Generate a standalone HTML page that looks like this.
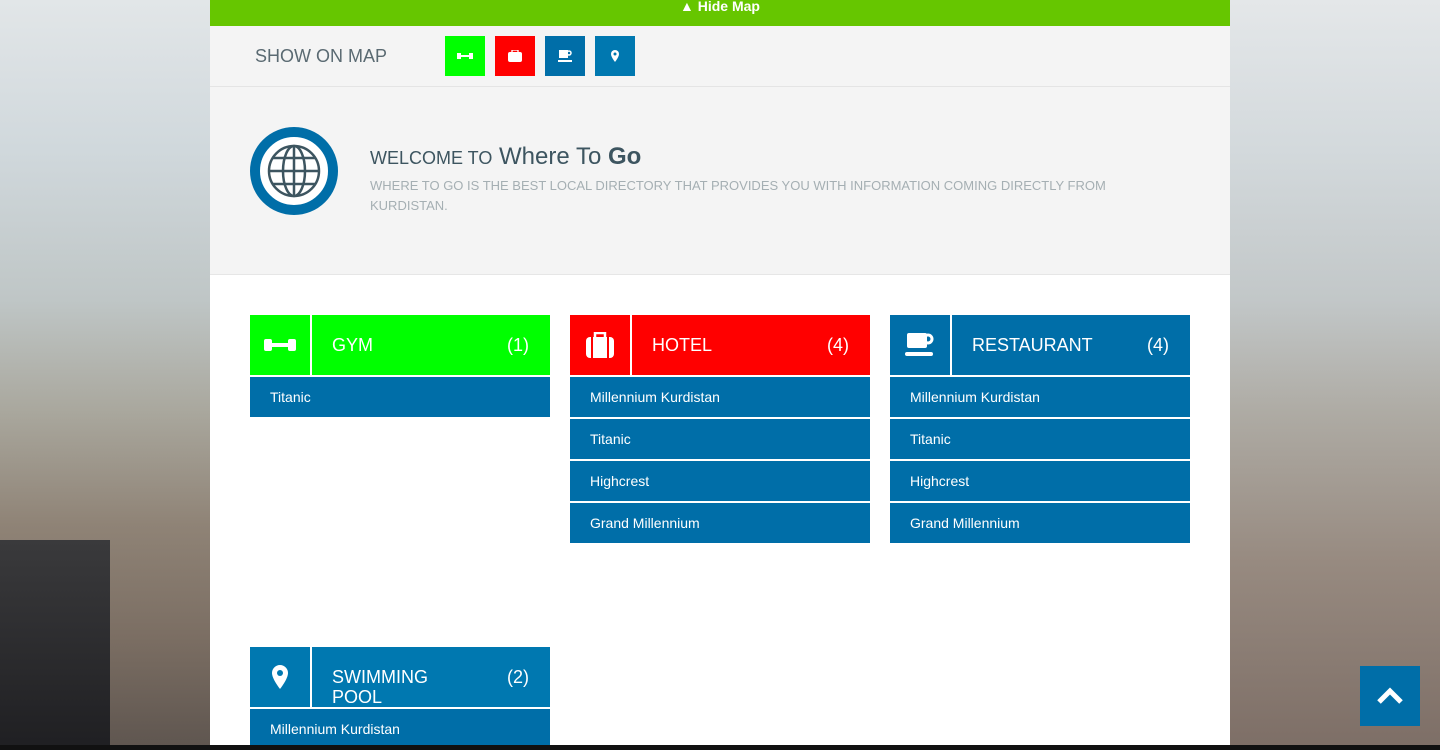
<!DOCTYPE html>
<html><head><style>
*{margin:0;padding:0;box-sizing:border-box}
body{width:1440px;height:750px;overflow:hidden;font-family:"Liberation Sans",sans-serif;position:relative;background:#b9b3a8}
.bgl{position:absolute;left:0;top:0;width:210px;height:750px;background:linear-gradient(180deg,#e2e6e8 0%,#d0d8dc 20%,#bfc6c6 40%,#a9a79d 55%,#8f8376 70%,#7b6e63 85%,#5e554f 100%)}
.bgl2{position:absolute;left:0;top:540px;width:110px;height:210px;background:linear-gradient(180deg,#3a3a3c,#1f1f22)}
.bgr{position:absolute;left:1230px;top:0;width:210px;height:750px;background:linear-gradient(180deg,#e4e7e9 0%,#d3d9dc 20%,#c2c7c8 40%,#aeaba4 55%,#978a80 75%,#7d6e66 100%)}
.wrap{position:absolute;left:210px;top:0;width:1020px;height:745px;background:#fff}
.top{height:26px;background:#66c600;color:#fff;font-weight:bold;font-size:14px;text-align:center;line-height:12px}
.show{height:61px;background:#f4f4f4;border-bottom:1px solid #e4e4e4;position:relative}
.show span{position:absolute;left:45px;top:20px;font-size:18px;color:#5a6a72;font-weight:300}
.btn{position:absolute;top:10px;width:40px;height:40px;display:flex;align-items:center;justify-content:center}
.wel{height:188px;background:#f4f4f4;border-bottom:1px solid #e6e6e6;position:relative}
.globe{position:absolute;left:40px;top:40px;width:88px;height:88px;border-radius:50%;border:10px solid #006ea8;background:#fff;display:flex;align-items:center;justify-content:center}
.h1{position:absolute;left:160px;top:56px;font-size:24px;color:#3d5560;font-weight:300}
.h1 small{font-size:18px}
.p{position:absolute;left:160px;top:89px;width:800px;font-size:13px;color:#a5afb3;line-height:20px}
.card{position:absolute;width:300px}
.hd{height:60px;display:flex;color:#fff;font-size:18px}
.ic{width:62px;display:flex;align-items:center;justify-content:center;border-right:2px solid #fff}
.tt{flex:1;padding-left:20px;display:flex;align-items:center;justify-content:space-between;padding-right:21px}
.it{height:40px;margin-top:2px;background:#006ea8;color:#fff;font-size:14px;line-height:40px;padding-left:20px}
.up{position:absolute;left:1360px;top:666px;width:60px;height:60px;background:#006ea8;display:flex;align-items:center;justify-content:center}
</style></head><body>
<div class="bgl"></div><div class="bgl2"></div><div class="bgr"></div>
<div class="wrap">
<div class="top">&#9650; Hide Map</div>
<div class="show"><span>SHOW ON MAP</span>
<div class="btn" style="left:235px;background:#00ff00"><svg width="16" height="8" viewBox="0 0 16 8"><rect x="0" y="1" width="4" height="6" fill="#fff"/><rect x="12" y="1" width="4" height="6" fill="#fff"/><rect x="3" y="3" width="10" height="2" fill="#fff"/></svg></div>
<div class="btn" style="left:285px;background:#ff0000"><svg width="14" height="12" viewBox="0 0 14 12"><rect x="0" y="2" width="14" height="10" rx="2" fill="#fff"/><rect x="4" y="0" width="6" height="3" fill="none" stroke="#fff" stroke-width="1.3"/></svg></div>
<div class="btn" style="left:335px;background:#006ea8"><svg width="14" height="13" viewBox="0 0 14 13"><rect x="1" y="0" width="9" height="8" fill="#fff"/><circle cx="11" cy="3" r="2" fill="none" stroke="#fff" stroke-width="1.5"/><rect x="0" y="10" width="14" height="2" fill="#fff"/></svg></div>
<div class="btn" style="left:385px;background:#0078b0"><svg width="8" height="12" viewBox="0 0 8 12"><path d="M4 0a4 4 0 0 1 4 4c0 3-4 8-4 8S0 7 0 4a4 4 0 0 1 4-4z" fill="#fff"/><circle cx="4" cy="4" r="1.5" fill="#0078b0"/></svg></div>
</div>
<div class="wel">
<div class="globe"><svg width="54" height="54" viewBox="0 0 54 54" fill="none" stroke="#3d5560" stroke-width="2.5"><circle cx="27" cy="27" r="25"/><ellipse cx="27" cy="27" rx="11" ry="25"/><line x1="27" y1="2" x2="27" y2="52"/><line x1="2" y1="27" x2="52" y2="27"/><path d="M6 14h42M6 40h42"/></svg></div>
<div class="h1"><small>WELCOME TO</small> Where To <b style="font-weight:bold">Go</b></div>
<div class="p">WHERE TO GO IS THE BEST LOCAL DIRECTORY THAT PROVIDES YOU WITH INFORMATION COMING DIRECTLY FROM KURDISTAN.</div>
</div>
</div>
<div class="card" style="left:250px;top:315px"><div class="hd" style="background:#00ff00"><div class="ic"><svg width="32" height="16" viewBox="0 0 32 16"><rect x="0" y="2" width="8" height="12" rx="2" fill="#fff"/><rect x="24" y="2" width="8" height="12" rx="2" fill="#fff"/><rect x="6" y="6" width="20" height="4" fill="#fff"/></svg></div><div class="tt"><span>GYM</span><span>(1)</span></div></div>
<div class="it">Titanic</div></div>
<div class="card" style="left:570px;top:315px"><div class="hd" style="background:#ff0000"><div class="ic"><svg width="28" height="26" viewBox="0 0 28 26"><rect x="0" y="5" width="28" height="21" rx="4" fill="#fff"/><rect x="9" y="1" width="10" height="6" fill="none" stroke="#fff" stroke-width="2.5"/><rect x="5" y="5" width="2" height="21" fill="#ff0000"/><rect x="21" y="5" width="2" height="21" fill="#ff0000"/></svg></div><div class="tt"><span>HOTEL</span><span>(4)</span></div></div>
<div class="it">Millennium Kurdistan</div><div class="it">Titanic</div><div class="it">Highcrest</div><div class="it">Grand Millennium</div></div>
<div class="card" style="left:890px;top:315px"><div class="hd" style="background:#006ea8"><div class="ic"><svg width="30" height="24" viewBox="0 0 30 24"><rect x="2" y="0" width="20" height="15" rx="2" fill="#fff"/><circle cx="23" cy="6" r="4" fill="none" stroke="#fff" stroke-width="3"/><rect x="0" y="19" width="28" height="4" rx="2" fill="#fff"/></svg></div><div class="tt"><span>RESTAURANT</span><span>(4)</span></div></div>
<div class="it">Millennium Kurdistan</div><div class="it">Titanic</div><div class="it">Highcrest</div><div class="it">Grand Millennium</div></div>
<div class="card" style="left:250px;top:647px"><div class="hd" style="background:#0078b0"><div class="ic"><svg width="16" height="24" viewBox="0 0 16 24"><path d="M8 0a8 8 0 0 1 8 8c0 6-8 16-8 16S0 14 0 8a8 8 0 0 1 8-8z" fill="#fff"/><circle cx="8" cy="8" r="3" fill="#0078b0"/></svg></div><div class="tt" style="align-items:flex-start;padding-top:20px;line-height:20px"><span>SWIMMING<br>POOL</span><span>(2)</span></div></div>
<div class="it">Millennium Kurdistan</div></div>
<div class="up"><svg width="28" height="18" viewBox="0 0 28 18"><path d="M3 15L14 4l11 11" fill="none" stroke="#fff" stroke-width="5"/></svg></div>
<div style="position:absolute;left:0;top:745px;width:1440px;height:5px;background:#111"></div>
</body></html>
